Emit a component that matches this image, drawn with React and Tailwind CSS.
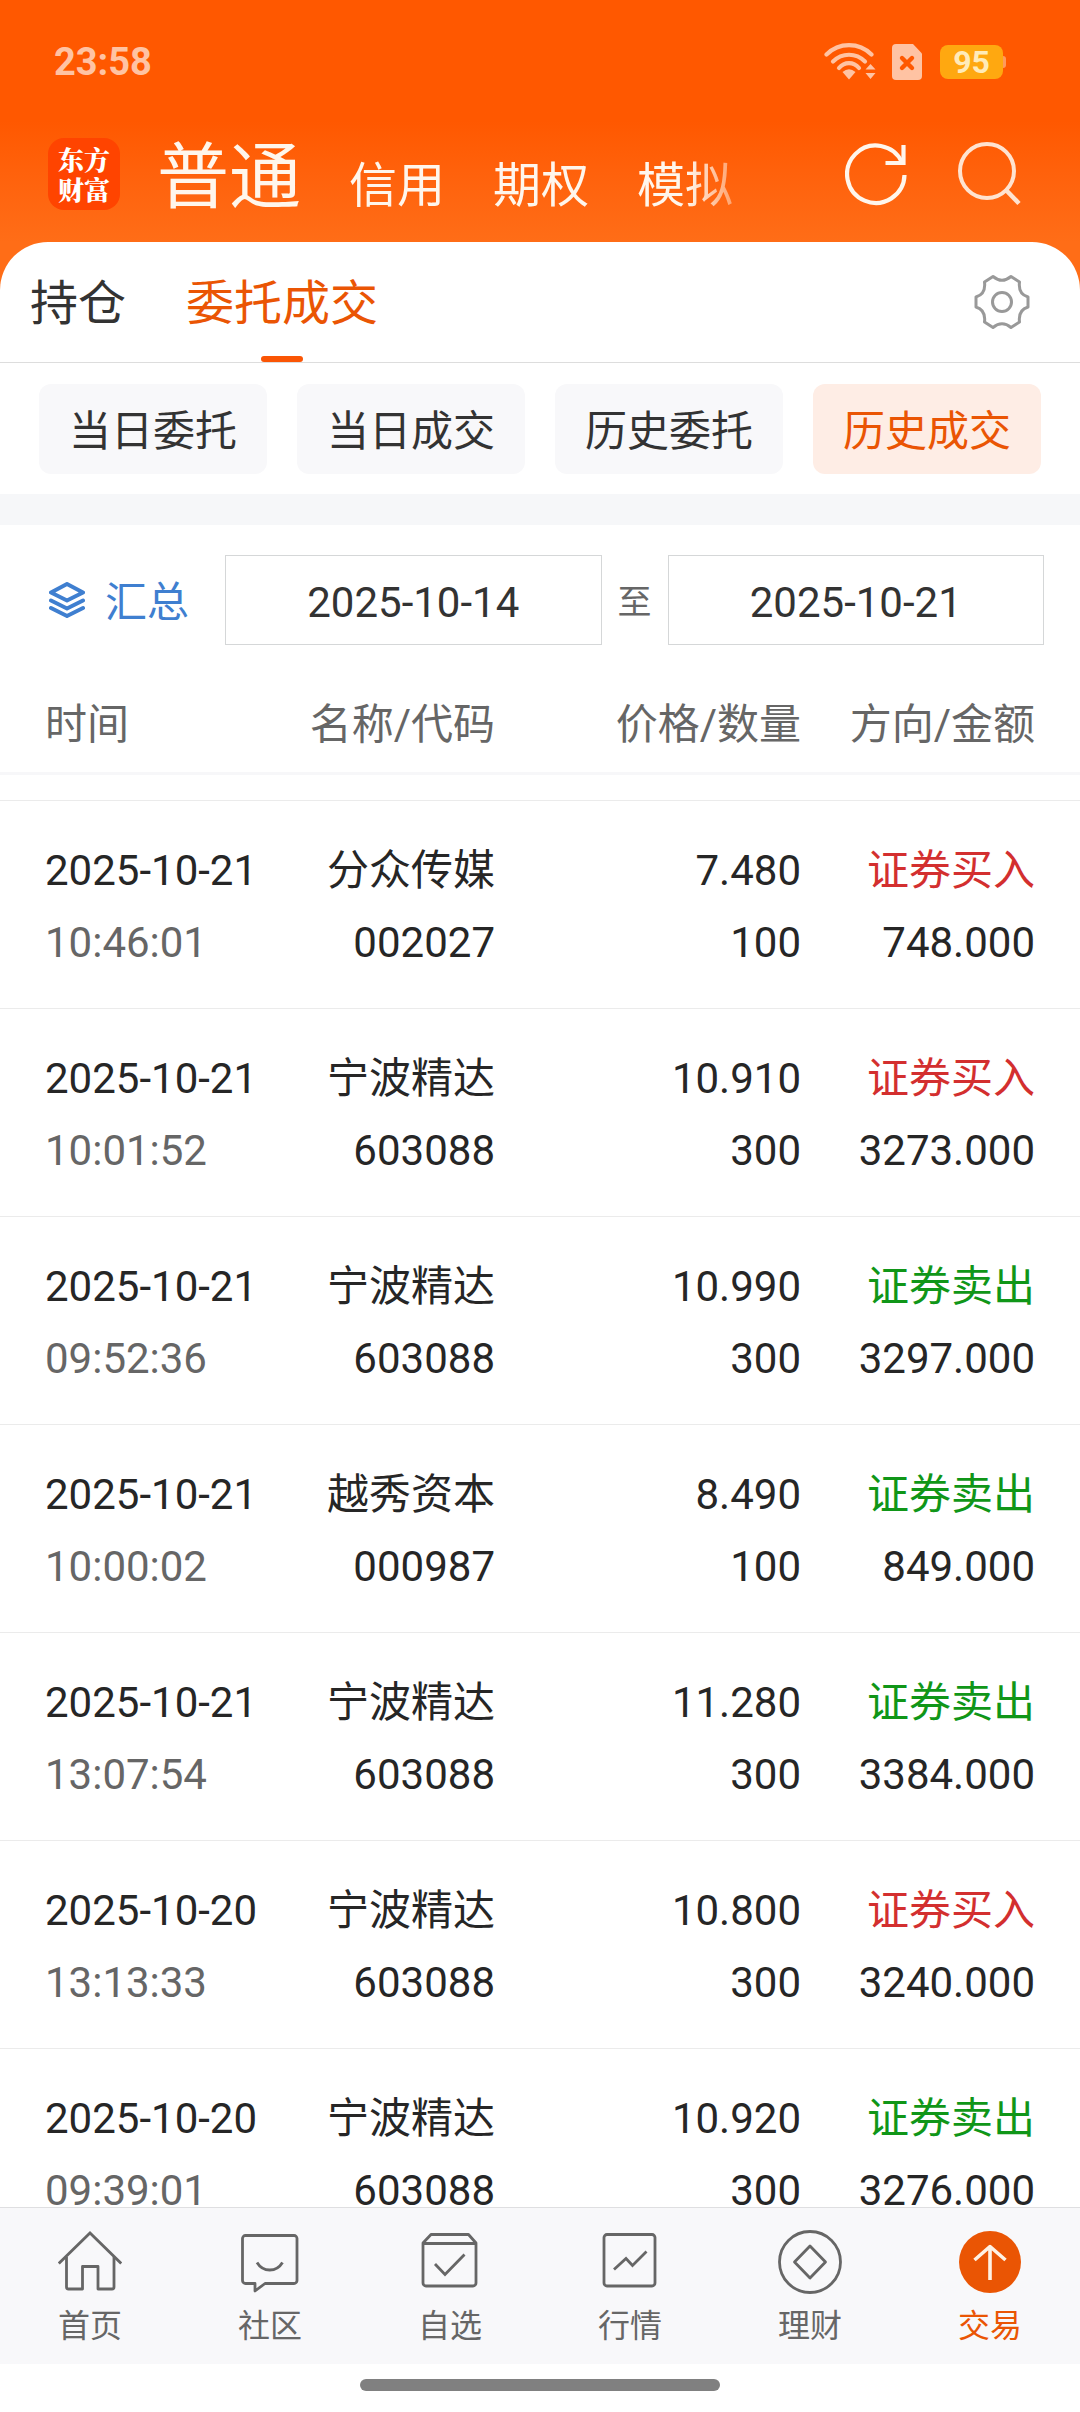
import { useState } from 'react';
import clsx from 'clsx';

const accountTabs = ['普通', '信用', '期权', '模拟'];
const filters = ['当日委托', '当日成交', '历史委托', '历史成交'];

const trades = [
  { date: '2025-10-21', time: '10:46:01', name: '分众传媒', code: '002027', price: '7.480', qty: '100', side: 'buy', amount: '748.000' },
  { date: '2025-10-21', time: '10:01:52', name: '宁波精达', code: '603088', price: '10.910', qty: '300', side: 'buy', amount: '3273.000' },
  { date: '2025-10-21', time: '09:52:36', name: '宁波精达', code: '603088', price: '10.990', qty: '300', side: 'sell', amount: '3297.000' },
  { date: '2025-10-21', time: '10:00:02', name: '越秀资本', code: '000987', price: '8.490', qty: '100', side: 'sell', amount: '849.000' },
  { date: '2025-10-21', time: '13:07:54', name: '宁波精达', code: '603088', price: '11.280', qty: '300', side: 'sell', amount: '3384.000' },
  { date: '2025-10-20', time: '13:13:33', name: '宁波精达', code: '603088', price: '10.800', qty: '300', side: 'buy', amount: '3240.000' },
  { date: '2025-10-20', time: '09:39:01', name: '宁波精达', code: '603088', price: '10.920', qty: '300', side: 'sell', amount: '3276.000' },
];

// --- Icons ---
const WifiIcon = () => (
  <svg className="w-[52px] h-[38px]" viewBox="0 0 52 38" fill="none" stroke="#ffc3a3" strokeWidth="4.200" strokeLinecap="round">
    <path d="M2.5 11.5C15-1 35-1 47.5 11.5" />
    <path d="M9 18.5C18 9.500 32 9.500 41 18.500" />
    <path d="M15 25C20.500 18.500 29.500 18.500 35 25" />
    <path d="M18.500 29Q25 23.500 31.500 29L25 36.500Z" fill="#ffc3a3" stroke="none" />
    <path d="M46.500 21L51.500 26.500H41.500ZM46.500 36L41.500 30H51.500Z" fill="#ffc3a3" stroke="none" />
  </svg>
);

const SimIcon = () => (
  <svg className="w-[30px] h-9" viewBox="0 0 30 36" fill="none">
    <path d="M4 0H21L30 9.500V32a4 4 0 0 1-4 4H4a4 4 0 0 1-4-4V4a4 4 0 0 1 4-4Z" fill="#ffc3a3" />
    <path d="M10 14L20 24M20 14L10 24" stroke="#ff5800" strokeWidth="4.400" strokeLinecap="round" />
  </svg>
);

const RefreshIcon = () => (
  <svg className="w-16 h-16" viewBox="0 0 64 64" fill="none" stroke="#fff6ec" strokeWidth="4.200">
    <path d="M59.500 33A28.700 28.700 0 1 1 57 20.500" />
    <path d="M58.500 3V21H40.500" />
  </svg>
);

const SearchIcon = () => (
  <svg className="w-16 h-16" viewBox="0 0 64 64" fill="none" stroke="#ffe3d0" strokeWidth="4">
    <circle cx="30" cy="29" r="27" />
    <path d="M48.500 47.500L62 61.500" strokeWidth="4.600" />
  </svg>
);

const GearIcon = () => (
  <svg className="w-14 h-14" viewBox="-28 -28 56 56" fill="none" stroke="#999999" strokeWidth="3">
    <path d="M-9-25.500Q0-18 9-25.500L17.500-20Q16-8 26-5V5Q16 8 17.500 20L9 25.500Q0 18-9 25.500L-17.500 20Q-16 8-26 5V-5Q-16-8-17.500-20Z" strokeLinejoin="round" />
    <circle r="9.500" />
  </svg>
);

const LayersIcon = () => (
  <svg className="w-9 h-9" viewBox="0 0 36 36" fill="none" stroke="#3f7fd0" strokeWidth="4" strokeLinecap="round" strokeLinejoin="round">
    <path d="M18 2L34 10.500L18 18.500L2 10.500Z" />
    <path d="M2 18.500L18 26.500L34 18.500" />
    <path d="M2 26L18 34L34 26" />
  </svg>
);

const NavSvg = ({ children }) => (
  <svg className="w-16 h-16" viewBox="0 0 64 64" fill="none" stroke="#666666" strokeWidth="2.800" strokeLinejoin="round">
    {children}
  </svg>
);

const navItems = [
  {
    label: '首页',
    icon: (
      <NavSvg>
        <path d="M.8 33.500L32 3L63.200 33.500" strokeLinejoin="miter" />
        <path d="M8.500 27V57a2 2 0 0 0 2 2H24.500V36.500H40V59H54a2 2 0 0 0 2-2V27" />
      </NavSvg>
    ),
  },
  {
    label: '社区',
    icon: (
      <NavSvg>
        <path d="M7.500 5.500H56a3 3 0 0 1 3 3V50.500a3 3 0 0 1-3 3H27L17 61V53.500H7.500a3 3 0 0 1-3-3V8.500a3 3 0 0 1 3-3Z" />
        <path d="M19 32.500C25 42.500 38.500 42.500 44.500 32.500" />
      </NavSvg>
    ),
  },
  {
    label: '自选',
    icon: (
      <NavSvg>
        <path d="M5 13L13 4.500H50.500L58 13V53a3 3 0 0 1-3 3H8a3 3 0 0 1-3-3ZM5 13.500H58" />
        <path d="M17 34L27 44.500L46.500 24.500" strokeLinejoin="miter" />
      </NavSvg>
    ),
  },
  {
    label: '行情',
    icon: (
      <NavSvg>
        <rect x="6" y="4.500" width="51" height="51.500" rx="3" />
        <path d="M16 39.500L28 28.500L34.500 35.500L48.500 21.500" strokeLinejoin="miter" />
      </NavSvg>
    ),
  },
  {
    label: '理财',
    icon: (
      <NavSvg>
        <circle cx="32" cy="32" r="30.500" />
        <path d="M32 16L47.500 32L32 48L16.500 32Z" />
      </NavSvg>
    ),
  },
  {
    label: '交易',
    icon: (
      <NavSvg>
        <circle cx="32" cy="32" r="31" fill="#ea5504" stroke="none" />
        <path d="M16.500 30L32 16.500L47.500 30M32 16.500V50" stroke="#fff2e4" strokeWidth="3.600" />
      </NavSvg>
    ),
  },
];

const TradeRow = ({ trade }) => (
  <tr className="border-t border-[#ebebeb] text-right align-top leading-[72px] whitespace-nowrap">
    <td className="pl-[45px] pt-[34px] pb-[29px] text-left">
      <div>{trade.date}</div>
      <div className="text-[#666666]">{trade.time}</div>
    </td>
    <td className="pt-[34px]">
      <div>{trade.name}</div>
      <div>{trade.code}</div>
    </td>
    <td className="pt-[34px]">
      <div>{trade.price}</div>
      <div>{trade.qty}</div>
    </td>
    <td className="pr-[45px] pt-[34px]">
      <div className={trade.side === 'buy' ? 'text-[#d32f2f]' : 'text-[#109618]'}>
        {trade.side === 'buy' ? '证券买入' : '证券卖出'}
      </div>
      <div>{trade.amount}</div>
    </td>
  </tr>
);

function App() {
  const [account, setAccount] = useState('普通');
  const [filter, setFilter] = useState('历史成交');
  const [startDate, setStartDate] = useState('2025-10-14');
  const [endDate, setEndDate] = useState('2025-10-21');

  return (
    <div className="flex flex-col h-screen overflow-hidden bg-[#ff6d17] text-[#333333] text-[42px] font-[Roboto,'Noto_Sans_CJK_SC',sans-serif]">

      {/* Header */}
      <header className="shrink-0 bg-linear-to-b from-[#ff5800] from-50% to-[#ff6d17]">
        <div className="flex items-center justify-between h-[124px] pl-[54px] pr-[74px]">
          <span className="text-[38px] font-bold text-[#ffc3a3]">23:58</span>
          <div className="flex items-center gap-4">
            <WifiIcon />
            <SimIcon />
            <div className="flex items-center">
              <span className="flex items-center justify-center w-[63px] h-[34px] ml-[2px] rounded-lg bg-[#ffa810] text-[32px] leading-none font-bold text-[#ffebb8]">95</span>
              <span className="w-[3px] h-3 rounded-r bg-[#ff9a5c]" />
            </div>
          </div>
        </div>

        <div className="flex items-center h-[118px] pl-12 pr-[59px] pb-[18px]">
          <div className="flex flex-col items-center justify-center shrink-0 w-[72px] h-[72px] rounded-2xl bg-[#ff4400] text-white text-[26px] leading-[30px] font-black font-['Noto_Serif_CJK_SC','Noto_Sans_CJK_SC',serif]">
            <span>东方</span>
            <span>财富</span>
          </div>
          <nav className="flex flex-1 items-baseline gap-12 ml-[37px] pt-2 text-[#fff6ec] whitespace-nowrap mask-[linear-gradient(to_right,black_530px,transparent_610px)]">
            {accountTabs.map((tab) => (
              <button
                key={tab}
                onClick={() => setAccount(tab)}
                className={tab === account ? 'text-[72px] leading-[80px]' : 'text-[48px] leading-[56px]'}
              >
                {tab}
              </button>
            ))}
          </nav>
          <div className="flex gap-12 shrink-0">
            <button aria-label="刷新"><RefreshIcon /></button>
            <button aria-label="搜索"><SearchIcon /></button>
          </div>
        </div>
      </header>

      <main className="flex flex-col flex-1 min-h-0 bg-white rounded-t-[48px]">
        {/* Section tabs */}
        <div className="flex items-center shrink-0 h-[121px] border-b border-[#dddddd] pl-[30px] pr-[50px] text-[48px]">
          <button className="h-full pt-1">持仓</button>
          <button className="relative h-full ml-[60px] pt-1 text-[#ea5504]">
            委托成交
            <span className="absolute bottom-0 left-1/2 -translate-x-1/2 w-[42px] h-[6px] rounded-full bg-[#fa5505]" />
          </button>
          <button aria-label="设置" className="ml-auto"><GearIcon /></button>
        </div>

        {/* Filters */}
        <div className="grid grid-cols-4 gap-[30px] shrink-0 px-[39px] pt-[21px] pb-5">
          {filters.map((item) => (
            <button
              key={item}
              onClick={() => setFilter(item)}
              className={clsx('h-[90px] pt-1 rounded-xl', item === filter ? 'bg-[#feede5] text-[#ea5504]' : 'bg-[#f8f8fa]')}
            >
              {item}
            </button>
          ))}
        </div>
        <div className="shrink-0 h-[31px] bg-[#f6f7f9]" />

        {/* Date range */}
        <div className="flex items-center shrink-0 pl-[49px] pr-9 pt-[30px]">
          <button className="flex items-center gap-5 shrink-0 text-[#3f7fd0]">
            <LayersIcon />
            <span className="pt-1">汇总</span>
          </button>
          <input
            aria-label="开始日期"
            value={startDate}
            onChange={(e) => setStartDate(e.target.value)}
            className="flex-1 min-w-0 h-[90px] ml-9 pt-1 border border-[#d5d7d8] text-center"
          />
          <span className="shrink-0 w-[66px] pt-1 text-center text-[34px] text-[#666666]">至</span>
          <input
            aria-label="结束日期"
            value={endDate}
            onChange={(e) => setEndDate(e.target.value)}
            className="flex-1 min-w-0 h-[90px] pt-1 border border-[#d5d7d8] text-center"
          />
        </div>

        {/* Trade history */}
        <div className="flex-1 min-h-0 overflow-hidden">
          <table className="w-full table-fixed border-collapse text-[#262626]">
            <thead>
              <tr className="h-[128px] border-b-3 border-[#f7f7f9] text-right text-[#666666]">
                <th className="w-[250px] pl-[45px] pt-[38px] pb-[6px] text-left font-normal">时间</th>
                <th className="w-[245px] pt-[38px] pb-[6px] font-normal">名称/代码</th>
                <th className="w-[306px] pt-[38px] pb-[6px] font-normal">价格/数量</th>
                <th className="w-[279px] pr-[45px] pt-[38px] pb-[6px] font-normal">方向/金额</th>
              </tr>
            </thead>
            <tbody>
              <tr className="h-[27px]"><td colSpan={4} /></tr>
              {trades.map((trade) => (
                <TradeRow key={trade.date + trade.time} trade={trade} />
              ))}
            </tbody>
          </table>
        </div>
      </main>

      {/* Bottom navigation */}
      <nav className="grid grid-cols-6 shrink-0 border-t border-[#dfdfe1] bg-[#f8f8fa] pt-[22px] pb-[18px]">
        {navItems.map((item) => (
          <a
            key={item.label}
            href="#"
            className={clsx('flex flex-col items-center gap-3 text-[32px] leading-10', item.label === '交易' ? 'text-[#ea5504]' : 'text-[#666666]')}
          >
            {item.icon}
            {item.label}
          </a>
        ))}
      </nav>
      <div className="flex justify-center shrink-0 bg-white pt-[15px] pb-[21px]">
        <span className="w-1/3 h-3 rounded-full bg-[#808080]" />
      </div>
    </div>
  );
}

export default App;
